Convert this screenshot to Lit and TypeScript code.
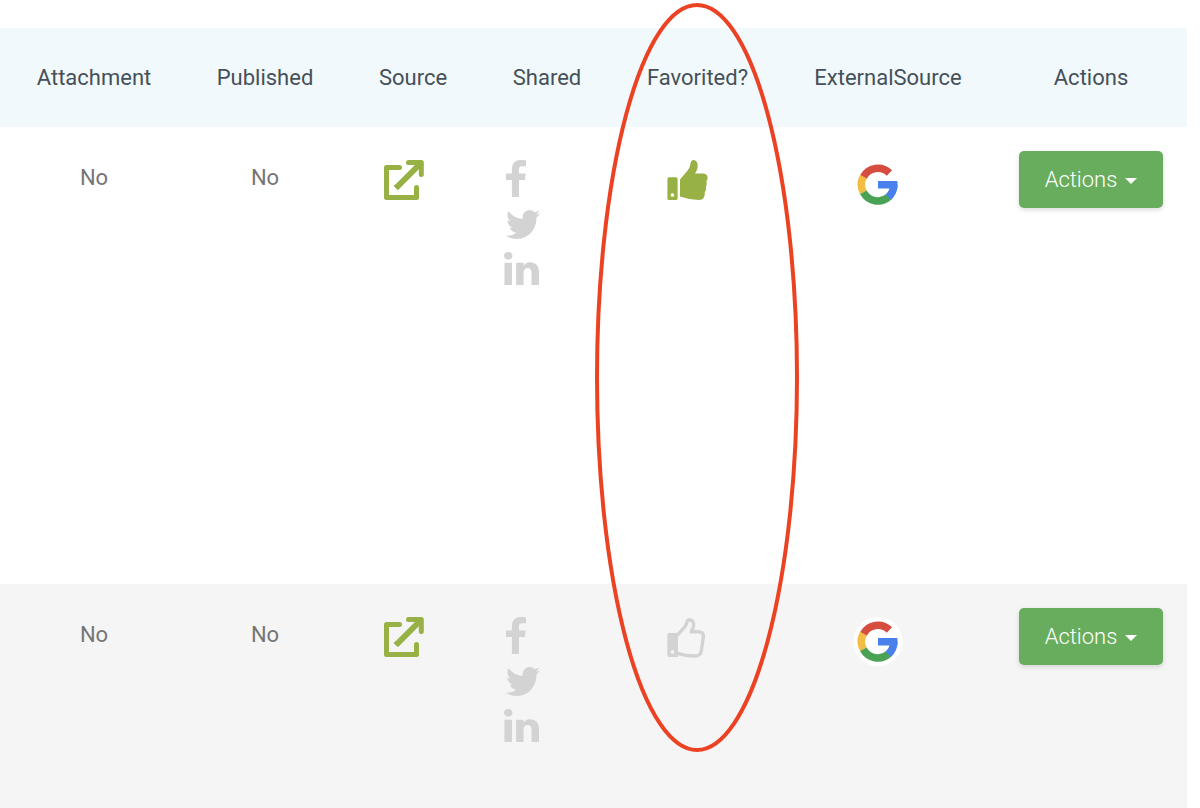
import { LitElement, html, css } from "lit";
import { customElement } from "lit/decorators.js";

interface Item {
  attachment: string;
  published: string;
  favorited: boolean;
}

const items: Item[] = [
  { attachment: "No", published: "No", favorited: true },
  { attachment: "No", published: "No", favorited: false },
];

const externalIcon = html`<svg class="icon" width="41" height="40" viewBox="-1 0 41 40" aria-hidden="true">
  <g fill="none" stroke="currentColor" stroke-linecap="round" stroke-linejoin="round">
    <path stroke-width="5" d="M15.5 7.5H2.5V37.5H32.5V27.5" />
    <path stroke-width="5" d="M24.5 2.6H37.3V14.5" />
    <path stroke-width="6" stroke-linecap="butt" d="M12 28L35 5" />
    <path stroke-width="2.6" d="M11.4 25.8L13.6 28" />
  </g>
  <path fill="currentColor" d="M30 4H36V10Z" />
</svg>`;

const facebookIcon = html`<svg class="icon" width="20" height="37" viewBox="479 0 864 1664" preserveAspectRatio="none" aria-hidden="true">
  <path fill="currentColor" d="M1343 12v264h-157q-86 0-116 36t-30 108v189h293l-39 296h-254v759h-306v-759h-255v-296h255v-218q0-186 104-288.5t277-102.5q147 0 228 12z" />
</svg>`;

const twitterIcon = html`<svg class="icon" width="34" height="29" viewBox="108 256 1576 1280" preserveAspectRatio="none" aria-hidden="true">
  <path fill="currentColor" d="M1684 408q-67 98-162 167 1 14 1 42 0 130-38 259.5t-115.5 248.5-184.5 210.5-258 146-323 54.5q-271 0-496-145 35 4 78 4 225 0 401-138-105-2-188-64.5t-114-159.5q33 5 61 5 43 0 85-11-112-23-185.5-111.5t-73.5-205.5v-4q68 38 146 41-66-44-105-115t-39-154q0-88 44-163 121 149 294.5 238.5t371.5 99.5q-8-38-8-74 0-134 94.5-228.5t228.5-94.5q140 0 236 102 109-21 205-78-37 115-142 178 93-10 186-50z" />
</svg>`;

const linkedinIcon = html`<svg class="icon" width="35" height="33" viewBox="128 148 1536 1468" preserveAspectRatio="none" aria-hidden="true">
  <path fill="currentColor" d="M477 625v991h-330v-991h330zm21-306q1 73-50.5 122t-135.5 49h-2q-82 0-132-49t-50-122q0-74 51.5-122.5t134.5-48.5 133 48.5 51 122.5zm1166 729v568h-329v-530q0-105-40.5-164.5t-126.5-59.5q-63 0-105.5 34.5t-63.5 85.5q-11 30-11 81v553h-329q2-399 2-647t-1-296l-1-48h329v144h-2q20-32 41-56t56.5-52 87-43.5 114.5-15.5q171 0 275 113.5t104 332.5z" />
</svg>`;

const thumbFilled = html`<svg class="icon" width="41" height="40" viewBox="0 0 41 40" aria-hidden="true">
  <path fill="currentColor" fill-rule="evenodd" d="M2 17.3H9Q10.6 17.3 10.6 19V38.4Q10.6 40 9 40H2Q.4 40 .4 38.4V19Q.4 17.3 2 17.3ZM5.4 33.2a1.8 1.8 0 1 0 .01 0Z" />
  <path fill="currentColor" d="M13 19.5L20 11.3Q23 8 23.3 4.5Q23.8 .2 26.5 .1Q31 .4 30.7 7Q30.4 10.5 28 13.6H36.5Q40.4 13.9 40.6 17.8Q40.6 20.2 39.3 21.3Q40.6 24.3 38.9 26.9Q39.6 30 37.8 32Q38.2 35.6 36.6 38Q35.5 39.9 32 40Q22.5 39.8 13 36.4Z" />
</svg>`;

const thumbOutline = html`<svg class="icon" width="41" height="41" viewBox="0 -1 41 41" aria-hidden="true">
  <path fill="currentColor" fill-rule="evenodd" d="M2 15H11V39H2Q.4 39 .4 37.5V16.6Q.4 15 2 15ZM5.4 32a1.9 1.9 0 1 0 .01 0Z" />
  <path fill="none" stroke="currentColor" stroke-width="3.4" stroke-linejoin="round" d="M10.5 17L17.8 8.8Q19.5 6.500 20 4Q20.7 1.7 22.5 1.7Q27 2.2 26.5 8Q26 11.2 24.3 13.8H31.5Q36.3 13.8 36.4 18.5L34.3 33Q33.5 37.5 29 38Q19.5 38.3 10.5 35.3" />
</svg>`;

const googleIcon = html`<svg class="google" width="50" height="50" viewBox="0 0 50 50" aria-hidden="true">
  <circle cx="25" cy="24.5" r="24.5" fill="#fff" />
  <g fill="none" stroke-width="7.6">
    <path stroke="#d64c3e" d="M10.4 17A16.4 16.4 0 0 1 36.4 13" />
    <path stroke="#f2bd42" d="M10.4 32.4A16.4 16.4 0 0 1 10.4 16.6" />
    <path stroke="#4aa354" d="M35.7 36.9A16.4 16.4 0 0 1 10.4 32.2" />
    <path stroke="#4a80ec" d="M41 25Q40.7 32 35.4 37.2" />
  </g>
  <path fill="#4a80ec" d="M25 21H44.3Q44.9 25 44.1 28.5H25Z" />
</svg>`;

@customElement("app-root")
export class AppRoot extends LitElement {
  static styles = css`
    :host {
      display: block;
      position: relative;
      min-height: 100vh;
      box-sizing: border-box;
      padding: 28px 13px 0 0;
      background: #fff;
      font-family: Roboto, "Liberation Sans", sans-serif;
      font-size: 22px;
      line-height: 34px;
      color: #757575;
    }
    .items {
      width: 100%;
      table-layout: fixed;
      border-collapse: collapse;
    }
    .w-attachment { width: 184px; }
    .w-published { width: 162px; }
    .w-source { width: 134px; }
    .w-shared { width: 134px; }
    .w-favorited { width: 167px; }
    .w-external { width: 214px; }
    .w-actions { width: 192px; }
    th {
      height: 99px;
      padding: 0;
      background: #f1f9fd;
      color: #455058;
      font-weight: 400;
      text-align: center;
      white-space: nowrap;
    }
    td {
      height: 457px;
      box-sizing: border-box;
      padding: 34px 0 0;
      text-align: center;
      vertical-align: top;
    }
    tr:last-child td {
      height: 224px;
    }
    th:first-child,
    td:first-child {
      padding-left: 4px;
    }
    tbody tr:nth-child(even) {
      background: #f5f5f5;
    }
    td.icon-cell,
    td.share-cell {
      padding-top: 33px;
    }
    td.icon-cell {
      padding-right: 20px;
    }
    td.actions-cell {
      padding-top: 24px;
    }
    .icon,
    .google {
      display: block;
    }
    .link {
      display: inline-block;
      vertical-align: top;
      color: #97b144;
    }
    .thumb {
      display: inline-block;
      vertical-align: top;
      padding: 0;
      border: 0;
      background: none;
      color: #d3d3d3;
      cursor: pointer;
    }
    .thumb.on {
      color: #97b144;
    }
    .shares {
      display: flex;
      flex-direction: column;
      align-items: flex-start;
      gap: 13px;
      padding-left: 24px;
    }
    .share {
      color: #d3d3d3;
    }
    .share.inset {
      padding-left: 2px;
    }
    .google {
      margin: 0 auto;
    }
    .menu {
      display: inline-flex;
      align-items: center;
      justify-content: center;
      gap: 8px;
      width: 144px;
      height: 57px;
      padding: 0;
      border: 0;
      border-radius: 5px;
      background: #68ad5d;
      box-shadow: 0 2px 5px rgba(0, 0, 0, 0.14);
      color: #fff;
      font: inherit;
      font-weight: 300;
      vertical-align: top;
      cursor: pointer;
    }
    .caret {
      margin-top: 3px;
      border: 6px solid transparent;
      border-top-color: #fff;
      border-bottom: 0;
    }
    .highlight {
      position: absolute;
      left: 595px;
      top: 3px;
      width: 204px;
      height: 749px;
      pointer-events: none;
    }
  `;

  render() {
    return html`
      <table class="items">
        <colgroup>
          <col class="w-attachment" />
          <col class="w-published" />
          <col class="w-source" />
          <col class="w-shared" />
          <col class="w-favorited" />
          <col class="w-external" />
          <col class="w-actions" />
        </colgroup>
        <thead>
          <tr>
            <th scope="col">Attachment</th>
            <th scope="col">Published</th>
            <th scope="col">Source</th>
            <th scope="col">Shared</th>
            <th scope="col">Favorited?</th>
            <th scope="col">ExternalSource</th>
            <th scope="col">Actions</th>
          </tr>
        </thead>
        <tbody>
          ${items.map(
            (item) => html`
              <tr>
                <td>${item.attachment}</td>
                <td>${item.published}</td>
                <td class="icon-cell">
                  <a class="link" href="#" aria-label="Open source">${externalIcon}</a>
                </td>
                <td class="share-cell">
                  <div class="shares">
                    <a class="share inset" href="#" aria-label="Facebook">${facebookIcon}</a>
                    <a class="share inset" href="#" aria-label="Twitter">${twitterIcon}</a>
                    <a class="share" href="#" aria-label="LinkedIn">${linkedinIcon}</a>
                  </div>
                </td>
                <td class="icon-cell">
                  <button class="thumb ${item.favorited ? "on" : ""}" type="button" aria-label="Favorite" aria-pressed=${item.favorited}>
                    ${item.favorited ? thumbFilled : thumbOutline}
                  </button>
                </td>
                <td class="icon-cell">${googleIcon}</td>
                <td class="actions-cell">
                  <button class="menu" type="button" aria-haspopup="true">
                    Actions<span class="caret"></span>
                  </button>
                </td>
              </tr>
            `
          )}
        </tbody>
      </table>
      <svg class="highlight" viewBox="0 0 204 749" aria-hidden="true">
        <ellipse cx="102" cy="374.5" rx="100" ry="372.5" fill="none" stroke="#ec4224" stroke-width="4" />
      </svg>
    `;
  }
}
